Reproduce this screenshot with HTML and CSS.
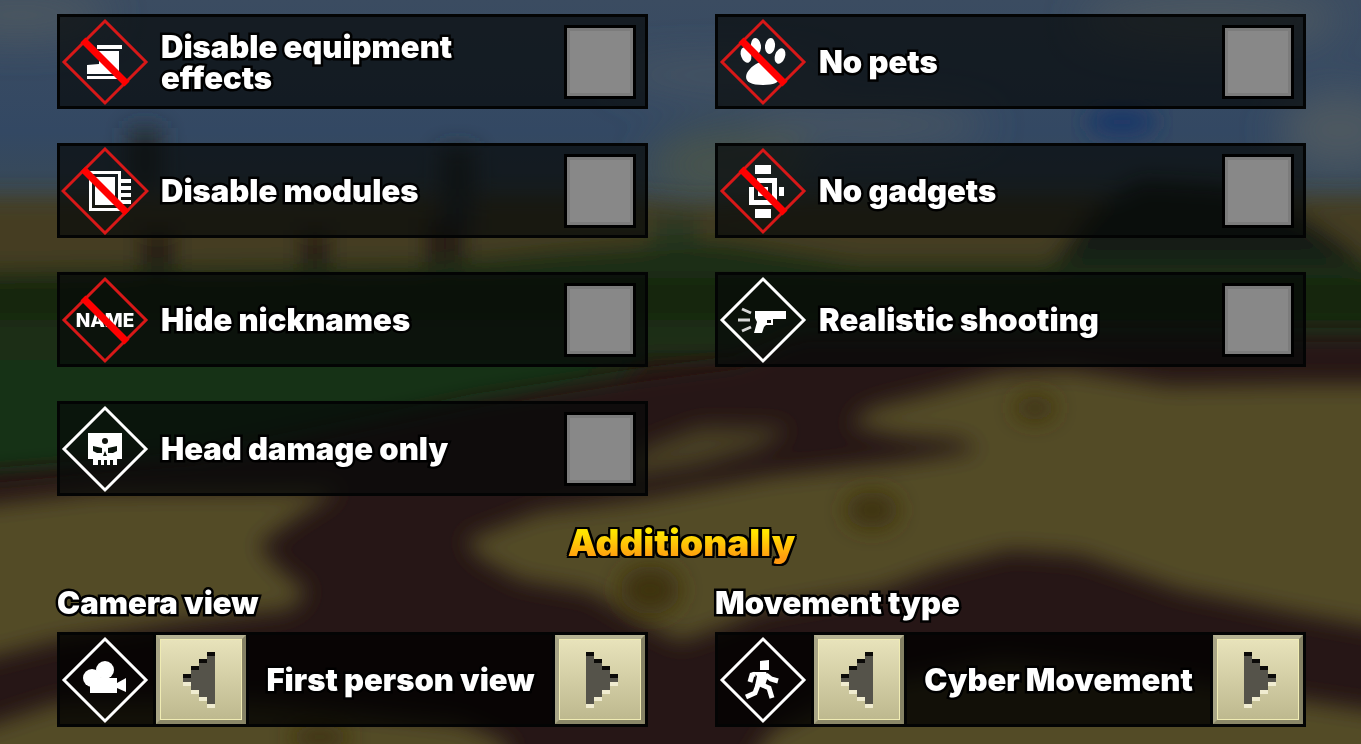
FILE: index.html
```html
<!DOCTYPE html>
<html lang="en">
<head>
    <meta charset="UTF-8">
    <meta name="viewport" content="width=device-width, initial-scale=1.0">
    <title>Match settings</title>
    <link rel="stylesheet" href="styles.css">
</head>
<body>
    <svg class="scene" viewBox="0 0 1361 744" preserveAspectRatio="none" aria-hidden="true">
        <defs>
            <filter id="soft" x="-20%" y="-20%" width="140%" height="140%"><feGaussianBlur stdDeviation="11"/></filter>
            <filter id="haze" x="-50%" y="-50%" width="200%" height="200%"><feGaussianBlur stdDeviation="20"/></filter>
            <linearGradient id="sky" x1="0" y1="0" x2="0" y2="1">
                <stop offset="0" stop-color="#3b4c61"/>
                <stop offset="0.6" stop-color="#334863"/>
                <stop offset="1" stop-color="#3b4a52"/>
            </linearGradient>
        </defs>
        <rect width="1361" height="744" fill="#271812"/>
        <rect width="1361" height="220" fill="url(#sky)"/>
        <!-- clouds -->
        <g filter="url(#haze)" fill="#4e5860">
            <ellipse cx="20" cy="15" rx="90" ry="22"/>
            <ellipse cx="720" cy="75" rx="110" ry="12"/>
            <ellipse cx="730" cy="165" rx="80" ry="40" fill="#46534e"/>
            <ellipse cx="870" cy="125" rx="120" ry="16"/>
            <ellipse cx="1210" cy="20" rx="130" ry="26"/>
            <ellipse cx="1340" cy="130" rx="60" ry="40"/>
        </g>
        <ellipse cx="1122" cy="122" rx="36" ry="16" fill="#1b3768" filter="url(#soft)"/>
        <!-- far fields -->
        <g filter="url(#soft)">
            <path d="M-40 196H600L700 205L820 196H1400V290H-40Z" fill="#453c22"/>
            <path d="M128 128H162V190H128ZM440 148H475V230H440Z" fill="#262d30"/>
            <path d="M140 230H175V280H140ZM300 230H330V280H300ZM425 220H465V280H425Z" fill="#261f14"/>
            <path d="M650 215H700V285H650Z" fill="#2b3820"/>
            <path d="M1050 265L1090 210L1140 180L1230 185L1310 220L1361 255V290H1050Z" fill="#151e15"/>
            <path d="M-40 270L420 264L560 250L720 240L860 262L1400 262V360H640L600 430L240 470L-40 480Z" fill="#1a2f16"/>
            <path d="M-40 278H1400V320H-40Z" fill="#152711"/>
            <path d="M-40 360H640L480 410L240 460L-40 480Z" fill="#173014"/>
        </g>
        <!-- ground -->
        <g filter="url(#soft)">
            <path d="M-40 478L200 458L480 400L640 375L740 362L800 335H1400V780H-40Z" fill="#271812"/>
        </g>
        <g filter="url(#soft)" fill="#524c28">
            <path d="M465 540L540 512L640 500L770 476L900 462L980 450L960 440L900 436L850 425L870 408L930 393L1000 374L1070 370L1170 386L1300 384L1400 384V632L1300 614L1180 590L1080 555L1010 550L940 568L880 590L760 610L720 628L680 642L640 622L590 592L520 580L480 558Z"/>
            <path d="M600 480L650 445L700 426L790 428L760 448L700 466L640 476Z" opacity="0.75"/>
            <path d="M-40 508L100 492L340 490L300 515L258 545L280 570L308 592L290 610L180 622L60 640L-40 665Z"/>
            <path d="M-40 735L60 702L250 700L460 722L510 745L500 780H-40Z"/>
            <path d="M740 780L770 732L850 690L1000 660L1150 675L1300 700L1400 715V780Z"/>
        </g>
        <g filter="url(#soft)" fill="#3c330f">
            <ellipse cx="872" cy="510" rx="26" ry="18"/>
            <ellipse cx="650" cy="590" rx="30" ry="24"/>
            <ellipse cx="1035" cy="408" rx="20" ry="12"/>
            <ellipse cx="320" cy="737" rx="30" ry="12"/>
        </g>
    </svg>

    <main class="settings">
        <section class="grid">
            <label class="panel">
                <svg class="icon" viewBox="0 0 88 88" aria-hidden="true">
                    <path class="glyph" d="M36 27H61V31H36ZM38 33H58V56H26V47L38 46ZM26 58H58V61H26Z"/>
                    <path class="ban" d="M44 3L85 44L44 85L3 44Z"/>
                    <path class="slash" d="M22 22L66 66"/>
                </svg>
                <span class="name">Disable equipment effects</span>
                <input class="check" type="checkbox">
            </label>

            <label class="panel">
                <svg class="icon" viewBox="0 0 88 88" aria-hidden="true">
                    <g class="glyph">
                        <ellipse cx="27" cy="37" rx="5" ry="8" transform="rotate(-20 27 37)"/>
                        <ellipse cx="37" cy="28" rx="5" ry="8" transform="rotate(-8 37 28)"/>
                        <ellipse cx="51" cy="28" rx="5" ry="8" transform="rotate(8 51 28)"/>
                        <ellipse cx="61" cy="38" rx="5" ry="8" transform="rotate(20 61 38)"/>
                        <path d="M44 44C51 44 53 51 58 56C63 62 59 67 44 67C29 67 25 62 28 55C31 50 37 44 44 44Z"/>
                    </g>
                    <path class="ban" d="M44 3L85 44L44 85L3 44Z"/>
                    <path class="slash" d="M22 22L66 66"/>
                </svg>
                <span class="name">No pets</span>
                <input class="check" type="checkbox">
            </label>

            <label class="panel">
                <svg class="icon" viewBox="0 0 88 88" aria-hidden="true">
                    <path class="glyph" fill-rule="evenodd" d="M28 24H60V32H70V36H60V39H70V43H60V46H70V50H60V53H70V57H60V64H28ZM31 27V61H57V27ZM34 30H54V58H34Z"/>
                    <path class="ban" d="M44 2L86 44L44 86L2 44Z"/>
                    <path class="slash" d="M22 22L66 66"/>
                </svg>
                <span class="name">Disable modules</span>
                <input class="check" type="checkbox">
            </label>

            <label class="panel">
                <svg class="icon" viewBox="0 0 88 88" aria-hidden="true">
                    <path class="glyph" fill-rule="evenodd" d="M36 18H52V27H36ZM36 62H52V71H36ZM38 31H58V58H30V40H38ZM35 36V53H53V36ZM39 40H49V49H39ZM60 40H65V49H60Z"/>
                    <path class="ban" d="M44 3L85 44L44 85L3 44Z"/>
                    <path class="slash" d="M22 22L66 66"/>
                </svg>
                <span class="name">No gadgets</span>
                <input class="check" type="checkbox">
            </label>

            <label class="panel">
                <svg class="icon" viewBox="0 0 88 88" aria-hidden="true">
                    <text class="tag" x="44" y="51">NAME</text>
                    <path class="ban" d="M44 3L85 44L44 85L3 44Z"/>
                    <path class="slash" d="M22 22L66 66"/>
                </svg>
                <span class="name">Hide nicknames</span>
                <input class="check" type="checkbox">
            </label>

            <label class="panel">
                <svg class="icon" viewBox="0 0 88 88" aria-hidden="true">
                    <path class="glyph" d="M36 35H67V43H54V49H47L45 51L43 57H35L38 46L36 42Z"/>
                    <path d="M48 44V47H52V44Z" fill="#10130e"/>
                    <path class="line" d="M23 33L32 37M19 44H31M23 55L32 51"/>
                    <path class="frame" d="M44 3L85 44L44 85L3 44Z"/>
                </svg>
                <span class="name">Realistic shooting</span>
                <input class="check" type="checkbox">
            </label>

            <label class="panel">
                <svg class="icon" viewBox="0 0 88 88" aria-hidden="true">
                    <path class="glyph" fill-rule="evenodd" d="M27 28H61V54H56V60H52V55H49V60H46V55H43V60H40V55H37V60H32V54H27ZM32 41V46L36 48H41V43ZM56 41V46L52 48H47V43ZM44 46L42 51H46Z"/>
                    <circle cx="44" cy="36" r="3" fill="#10130e"/>
                    <path class="frame" d="M44 3L85 44L44 85L3 44Z"/>
                </svg>
                <span class="name">Head damage only</span>
                <input class="check" type="checkbox">
            </label>
        </section>

        <h2 class="heading">Additionally</h2>

        <section class="grid">
            <div class="field">
                <h3 class="title">Camera view</h3>
                <div class="panel picker">
                    <svg class="icon" viewBox="0 0 88 88" aria-hidden="true">
                        <g class="glyph">
                            <circle cx="31" cy="42" r="9"/>
                            <circle cx="44" cy="34" r="9"/>
                            <path d="M29 42H56V47L65 42V56L56 52V57H29Z"/>
                        </g>
                        <path class="frame" d="M44 3L85 44L44 85L3 44Z"/>
                    </svg>
                    <button class="arrow" type="button" aria-label="Previous camera view">
                        <svg viewBox="0 0 32 56" aria-hidden="true">
                            <path fill="#55534a" d="M0 22H8V14H16V7H24V0H32V56H24V48H16V41H8V33H0Z"/>
                            <path fill="#0b0a08" d="M0 22H8V26H0ZM8 14H16V18H8ZM16 7H24V11H16ZM24 0H32V4H24Z"/>
                            <path fill="#f0ecd0" d="M0 30H8V34H0ZM8 38H16V42H8ZM16 45H24V49H16ZM24 52H32V56H24Z"/>
                        </svg>
                    </button>
                    <output class="value">First person view</output>
                    <button class="arrow next" type="button" aria-label="Next camera view">
                        <svg viewBox="0 0 32 56" aria-hidden="true">
                            <path fill="#55534a" d="M0 22H8V14H16V7H24V0H32V56H24V48H16V41H8V33H0Z"/>
                            <path fill="#0b0a08" d="M0 22H8V26H0ZM8 14H16V18H8ZM16 7H24V11H16ZM24 0H32V4H24Z"/>
                            <path fill="#f0ecd0" d="M0 30H8V34H0ZM8 38H16V42H8ZM16 45H24V49H16ZM24 52H32V56H24Z"/>
                        </svg>
                    </button>
                </div>
            </div>

            <div class="field">
                <h3 class="title">Movement type</h3>
                <div class="panel picker">
                    <svg class="icon" viewBox="0 0 88 88" aria-hidden="true">
                        <path class="glyph" d="M41 25L50 24V34H41ZM33 36H47L49 40L46 50H36L38 40Z"/>
                        <path class="limb" d="M36 38L33 39L31 46M47 39L52 43L59 45M41 48L50 52L53 62M39 49L36 57L27 61"/>
                        <path class="frame" d="M44 3L85 44L44 85L3 44Z"/>
                    </svg>
                    <button class="arrow" type="button" aria-label="Previous movement type">
                        <svg viewBox="0 0 32 56" aria-hidden="true">
                            <path fill="#55534a" d="M0 22H8V14H16V7H24V0H32V56H24V48H16V41H8V33H0Z"/>
                            <path fill="#0b0a08" d="M0 22H8V26H0ZM8 14H16V18H8ZM16 7H24V11H16ZM24 0H32V4H24Z"/>
                            <path fill="#f0ecd0" d="M0 30H8V34H0ZM8 38H16V42H8ZM16 45H24V49H16ZM24 52H32V56H24Z"/>
                        </svg>
                    </button>
                    <output class="value">Cyber Movement</output>
                    <button class="arrow next" type="button" aria-label="Next movement type">
                        <svg viewBox="0 0 32 56" aria-hidden="true">
                            <path fill="#55534a" d="M0 22H8V14H16V7H24V0H32V56H24V48H16V41H8V33H0Z"/>
                            <path fill="#0b0a08" d="M0 22H8V26H0ZM8 14H16V18H8ZM16 7H24V11H16ZM24 0H32V4H24Z"/>
                            <path fill="#f0ecd0" d="M0 30H8V34H0ZM8 38H16V42H8ZM16 45H24V49H16ZM24 52H32V56H24Z"/>
                        </svg>
                    </button>
                </div>
            </div>
        </section>
    </main>
</body>
</html>
```
FILE: styles.css
```css
* {
    box-sizing: border-box;
}

body {
    margin: 0;
    background-color: #2a2518;
    color: #ffffff;
    font-family: Inter, "Open Sans", sans-serif;
    font-weight: 900;
}

.scene {
    position: fixed;
    inset: 0;
    width: 100%;
    height: 100%;
    z-index: -1;
}

.settings {
    padding: 14px 55px 16px 57px;
}

.grid {
    display: grid;
    grid-template-columns: 1fr 1fr;
    column-gap: 67px;
    row-gap: 34px;
}

.panel {
    display: flex;
    align-items: center;
    min-height: 95px;
    padding: 0 9px 0 1px;
    border: 3px solid #030404;
    background-color: rgba(6, 8, 8, 0.7);
}

.icon {
    flex: none;
    width: 88px;
    height: 88px;
}

.glyph {
    fill: #ffffff;
}

.ban,
.frame {
    fill: none;
    stroke: #d81818;
    stroke-width: 3;
}

.frame {
    stroke: #ffffff;
}

.slash {
    stroke: #ff0000;
    stroke-width: 7;
}

.line {
    stroke: #d8d8d8;
    stroke-width: 3;
}

.limb {
    fill: none;
    stroke: #ffffff;
    stroke-width: 5;
}

.tag {
    fill: #ffffff;
    font-size: 19px;
    font-weight: 800;
    text-anchor: middle;
}

.name,
.title,
.value {
    font-size: 31px;
    line-height: 31px;
    -webkit-text-stroke: 5px #000000;
    paint-order: stroke fill;
}

.name {
    flex: 1;
    padding: 0 64px 0 12px;
}

.check {
    appearance: none;
    flex: none;
    width: 72px;
    height: 74px;
    margin: 0;
    border: 3px solid #000000;
    background-color: #888888;
    box-shadow: inset 0 0 0 3px #7c7c7c;
    cursor: pointer;
}

.check:checked {
    background-color: #e0d8a0;
}

.heading {
    width: fit-content;
    margin: 25px auto 22px;
    font-size: 37px;
    font-weight: 900;
    line-height: 44px;
    color: transparent;
    background: linear-gradient(#ffe600 25%, #ff9a10 85%);
    background-clip: text;
    filter: drop-shadow(2px 0 0 #000000) drop-shadow(-2px 0 0 #000000) drop-shadow(0 2px 0 #000000) drop-shadow(0 -2px 0 #000000);
}

.title {
    margin: 0 0 14px;
    font-weight: 900;
}

.picker {
    padding-right: 0;
    background-color: rgba(0, 0, 0, 0.78);
}

.value {
    flex: 1;
    text-align: center;
    white-space: nowrap;
}

.arrow {
    display: flex;
    align-items: center;
    justify-content: center;
    flex: none;
    width: 90px;
    height: 89px;
    margin-left: 7px;
    padding: 0 4px 0 0;
    border: 4px solid;
    border-color: #b5b292 #858265 #8a8768 #a8a586;
    background: linear-gradient(#e8e3bb, #bdb88e);
    box-shadow: inset 0 0 0 1px #f0ecb4, 0 0 0 3px #030404;
    cursor: pointer;
}

.arrow svg {
    width: 32px;
    height: 56px;
}

.next {
    margin-left: 0;
    padding: 0 0 0 4px;
}

.next svg {
    transform: scaleX(-1);
}
```
